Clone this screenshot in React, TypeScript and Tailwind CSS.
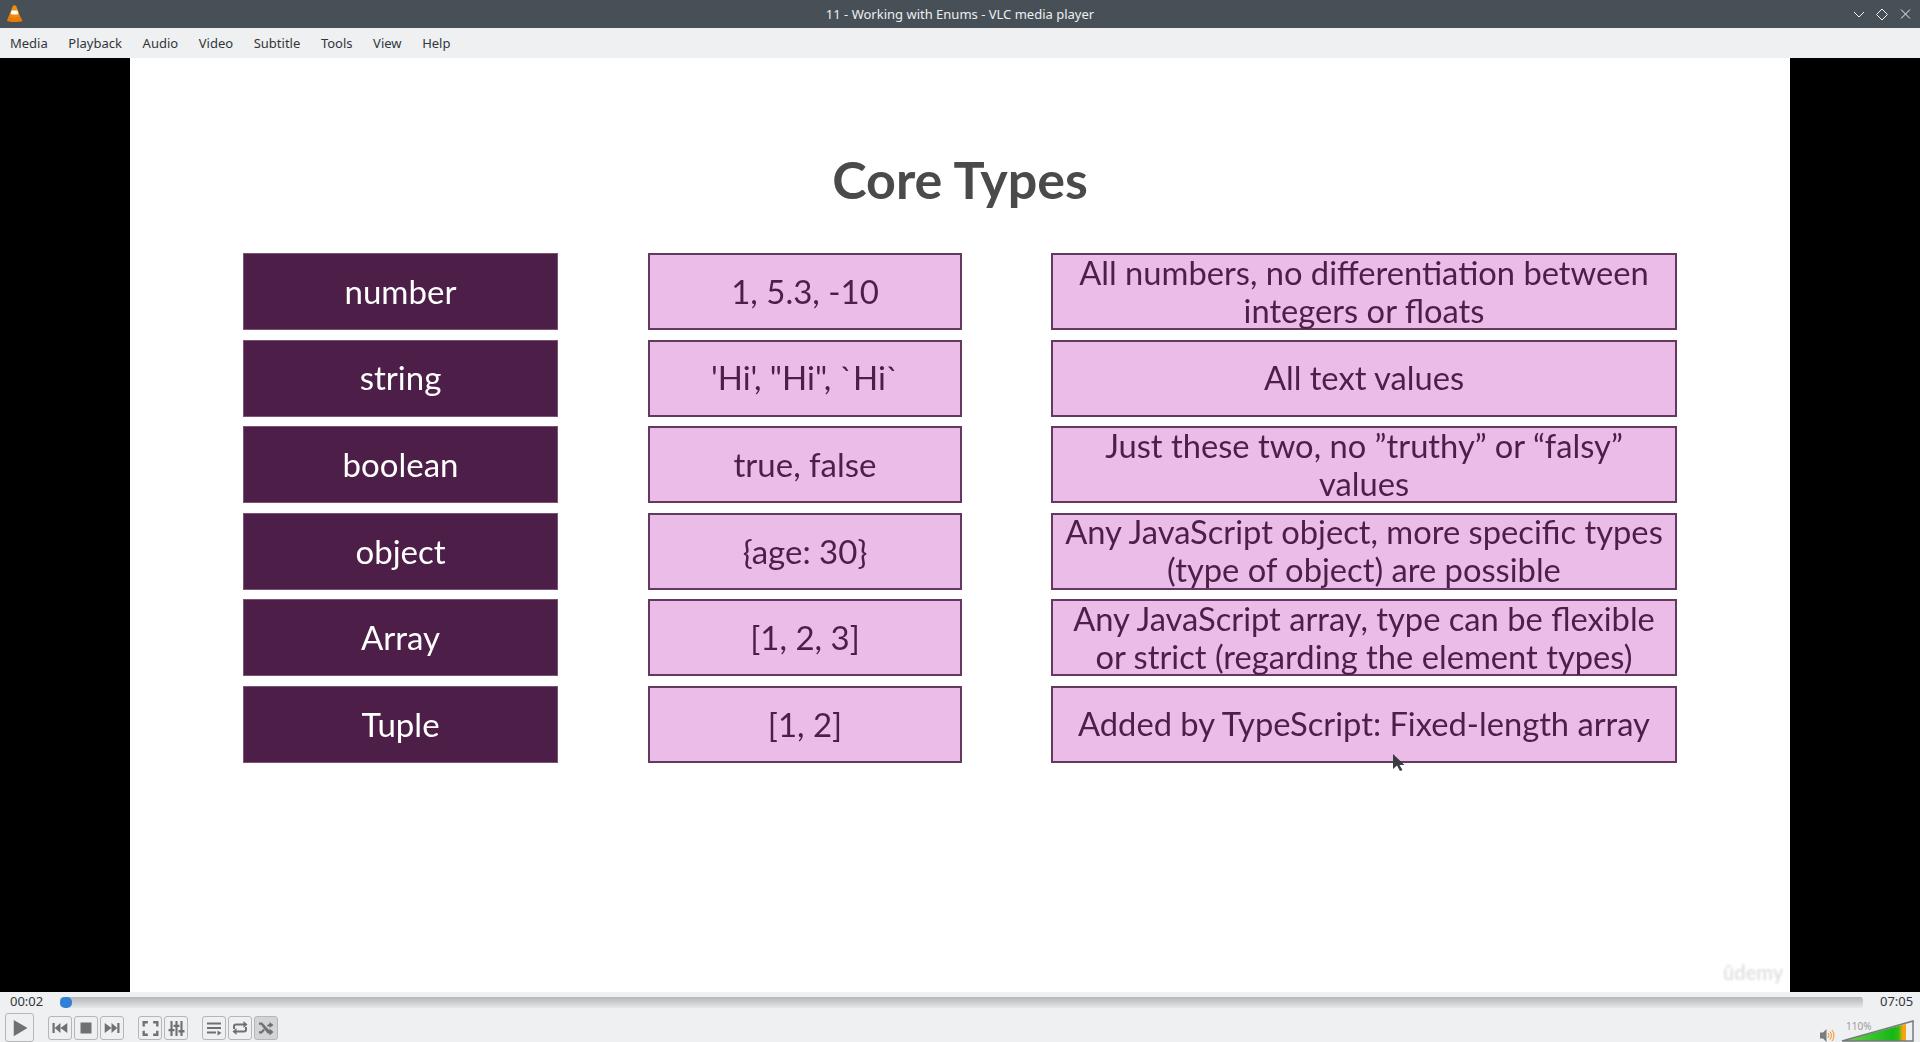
const menus = ["Media", "Playback", "Audio", "Video", "Subtitle", "Tools", "View", "Help"];
const rows = [
  ["number", "1, 5.3, -10", "All numbers, no differentiation between\nintegers or floats"],
  ["string", "'Hi', \"Hi\", `Hi`", "All text values"],
  ["boolean", "true, false", "Just these two, no ”truthy” or “falsy”\nvalues"],
  ["object", "{age: 30}", "Any JavaScript object, more specific types\n(type of object) are possible"],
  ["Array", "[1, 2, 3]", "Any JavaScript array, type can be flexible\nor strict (regarding the element types)"],
  ["Tuple", "[1, 2]", "Added by TypeScript: Fixed-length array"],
];

function Btn({ children, checked, big }: { children: React.ReactNode; checked?: boolean; big?: boolean }) {
  return (
    <div className={`flex items-center justify-center rounded-[3px] border border-[#b4b6b8] ${big ? "w-[29px] h-[29px]" : "w-[24px] h-[24px]"} ${checked ? "bg-[#d2d4d6]" : "bg-[#eff0f1]"}`}>
      {children}
    </div>
  );
}

function I({ children, s = 16 }: { children: React.ReactNode; s?: number }) {
  return <svg width={s} height={s} viewBox="0 0 16 16" fill="#6e7173" stroke="none">{children}</svg>;
}

export default function App() {
  return (
    <div className="w-[1920px] h-[1042px] flex flex-col overflow-hidden bg-black font-['Noto_Sans',sans-serif]">
      <div className="h-[28px] bg-[#475057] flex items-center relative shrink-0">
        <svg className="absolute left-[6px] top-[5px]" width="17" height="18" viewBox="0 0 17 18">
          <path d="M7 0.500h3l5 13h-13z" fill="#f28c0f" />
          <path d="M5.600 5.500h5.800l1 3.200c-2 1.200-5.800 1.200-7.800 0z" fill="#fff" />
          <path d="M2.500 12l2-.5c2 1.500 6 1.500 8 0l2 .5 2 3.500c0 2-15.500 2-15.500 0z" fill="#e77c06" />
        </svg>
        <div className="w-full text-center text-[13px] leading-[30px] text-[#eceff1]">11 - Working with Enums - VLC media player</div>
        <svg className="absolute left-[1852px] top-[8px]" width="62" height="13" viewBox="0 0 62 13" fill="none" stroke="#f0f2f3" strokeWidth="1">
          <path d="M2 4l5 5 5-5" />
          <path d="M30 1l5.500 5.500-5.500 5.500-5.500-5.500z" />
          <path d="M49 1.500l9 9M58 1.500l-9 9" />
        </svg>
      </div>
      <div className="h-[30px] bg-[#eff0f1] flex items-center text-[13px] leading-[32px] text-[#31363b] shrink-0">
        <div className="flex pl-[10px] gap-[20.600px]">
          {menus.map((m) => <span key={m}>{m}</span>)}
        </div>
      </div>
      <div className="h-[934px] flex shrink-0 relative">
        <div className="w-[130px] bg-black" />
        <div className="w-[1660px] h-full bg-white pt-[91px] pl-[113px] font-['Lato',sans-serif]">
          <div className="text-center text-[52px] leading-[60px] font-bold text-[#4a4a4a] pr-[113px] mb-[44px] blur-[0.500px]">Core Types</div>
          <div className="flex flex-col gap-[9.600px] blur-[0.400px]">
            {rows.map((r) => (
              <div key={r[0]} className="flex h-[77px] text-center">
                <div className="w-[315px] bg-[#4d1e48] border border-[#7a5475] text-white text-[33px] flex items-center justify-center">{r[0]}</div>
                <div className="w-[314px] ml-[90px] bg-[#ecbce9] border-2 border-[#63395f] text-[#4d1e48] text-[33px] flex items-center justify-center">{r[1]}</div>
                <div className="w-[626px] ml-[89px] bg-[#ecbce9] border-2 border-[#63395f] text-[#4d1e48] text-[32.700px] leading-[38px] flex items-center justify-center whitespace-pre-line">{r[2]}</div>
              </div>
            ))}
          </div>
        </div>
        <div className="w-[130px] bg-black" />
        <div className="absolute left-[1723px] top-[899px] text-[20px] font-bold text-[#e2e2e2] font-['Lato',sans-serif] blur-[1px]">ûdemy</div>
        <svg className="absolute left-[1392px] top-[695px]" width="14" height="20" viewBox="0 0 14 20">
          <path d="M1 1v15l4-3.500 3 5.500 2.500-1-3-5h5z" fill="#3a3d40" />
        </svg>
      </div>
      <div className="h-[50px] bg-[#eff0f1] flex flex-col shrink-0">
        <div className="h-[20px] flex items-center text-[13px] text-[#31363b]">
          <span className="w-[60px] pl-[10px]">00:02</span>
          <div className="w-[1803px] h-[11px] rounded-[3px] bg-gradient-to-b from-[#b4b7b9] to-[#e6e7e8]">
            <div className="w-[12px] h-[11px] rounded-[5px] bg-[#2f80d6]" />
          </div>
          <span className="pl-[17px]">07:05</span>
        </div>
        <div className="flex items-end h-[30px] pl-[5px] relative">
          <Btn big><I s={20}><path d="M3 1.500l11 6.500-11 6.500z" /></I></Btn>
          <div className="flex gap-[2px] ml-[14px] mb-[2px]">
            <Btn><I><path d="M0.500 3h2.200v10H0.500zM8.500 3v10L2.700 8zM15.300 3v10L8.500 8z" /></I></Btn>
            <Btn><I><rect x="2.500" y="2.500" width="11" height="11" /></I></Btn>
            <Btn><I><path d="M13.300 3h2.200v10h-2.200zM7.500 3v10l5.800-5zM0.700 3v10l6.800-5z" /></I></Btn>
          </div>
          <div className="flex gap-[2px] ml-[14px] mb-[2px]">
            <Btn><I s={17}><path d="M0.500 1h5v2.200H2.700v2.800H0.500zM10.500 1h5v5h-2.200V3.200h-2.800zM0.500 10h2.200v2.800h2.800V15h-5zM13.300 10h2.200v5h-5v-2.200h2.800z" /></I></Btn>
            <Btn><I s={17}><path d="M2.300 1h2v14h-2zM7 1h2v14H7zM11.700 1h2v14h-2zM0.500 8.500h5.600v2.200H0.500zM5.200 4.500h5.600v2.200H5.200zM9.900 9.500h5.600v2.200H9.900z" /></I></Btn>
          </div>
          <div className="flex gap-[2px] ml-[14px] mb-[2px]">
            <Btn><I><path d="M1 2.500h14v2H1zM1 7h14v2H1zM1 11.500h9v2H1zM11.500 10.500l4 2.500-4 2.500z" /></I></Btn>
            <Btn><I><path d="M1 9V6.500A3 3 0 0 1 4 3.500h7.500V1l4 3.500-4 3.500V5.600H4a1 1 0 0 0-1 1V9zM15 7v2.500a3 3 0 0 1-3 3H4.500V15l-4-3.500 4-3.500v2.400H12a1 1 0 0 0 1-1V7z" /></I></Btn>
            <Btn checked><I><path d="M1 2.500h3l7.500 8V8.500l4 3.500-4 3.500v-2h-1.800L3 4.700H1zM1 11.300h2l2.500-2.600 1.400 1.500-3 3.200H1zM8.800 5.800l1-1.100c.5-.5 1-.7 1.700-.7V2l4 3-4 3V6h-.5l-.8.800z" /></I></Btn>
          </div>
          <svg className="absolute left-[1820px] top-[17px]" width="15" height="13" viewBox="0 0 15 13" fill="none">
            <path d="M0 3.500h3l3.500-3.500v13L3 9.500H0z" fill="#7a7d80" />
            <path d="M8 4c1 1.500 1 3.500 0 5M10 2.500c1.800 2.500 1.800 5.500 0 8M12 1c2.600 3.500 2.600 7.500 0 11" stroke="#f08a12" strokeWidth="1" />
          </svg>
          <span className="absolute left-[1846px] top-[9px] text-[10px] leading-none text-[#9a9da0]">110%</span>
          <svg className="absolute left-[1840px] top-[7px]" width="75" height="23" viewBox="0 0 75 23">
            <defs>
              <linearGradient id="vol" x1="0" x2="1" y1="0" y2="0">
                <stop offset="0" stopColor="#6fd14f" />
                <stop offset="0.8" stopColor="#16b716" />
                <stop offset="0.88" stopColor="#2fbb10" />
                <stop offset="0.95" stopColor="#f5a60d" />
                <stop offset="1" stopColor="#f5a60d" />
              </linearGradient>
            </defs>
            <path d="M2 22L66 5v17z" fill="url(#vol)" />
            <path d="M2 22L73 2v20z" fill="none" stroke="#76797c" strokeWidth="1.500" />
          </svg>
        </div>
      </div>
    </div>
  );
}
